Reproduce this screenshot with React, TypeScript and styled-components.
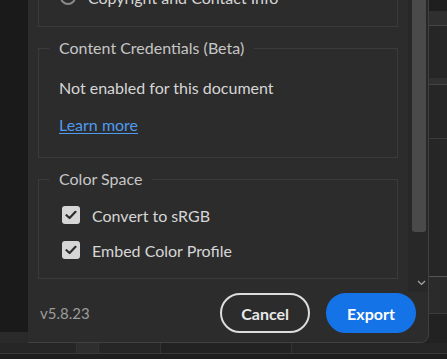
import styled, { createGlobalStyle } from 'styled-components';

const GlobalStyle = createGlobalStyle`
  html, body {
    margin: 0;
    padding: 0;
    background: #1e1e1e;
    overflow: hidden;
  }
  body {
    font-family: Lato, "Noto Sans", sans-serif;
  }
`;

// Fundo da aplicação + diálogo
const Page = styled.div`
  width: 447px;
  height: 359px;
  display: grid;
  grid-template-columns: 28px 401px 1fr;
  grid-template-rows: 343px 1fr;
  background: #1e1e1e;
`;

const LeftRail = styled.div`
  display: flex;
  flex-direction: column;
  background: #2a2a2a;
`;

const LeftDark = styled.div`
  height: 332px;
  background: #1a1a1a;
`;

const RightRail = styled.div`
  display: flex;
  flex-direction: column;
  background: #262626;
`;

const Band = styled.div<{ h: number; bg: string; line?: string }>`
  height: ${p => p.h}px;
  flex-shrink: 0;
  background: ${p => p.bg};
  border-bottom: 1px solid ${p => p.line || 'transparent'};
  box-sizing: border-box;
`;

const BottomBar = styled.div`
  grid-column: 1 / -1;
  display: flex;
  flex-direction: column;
`;

const BottomRow = styled.div`
  height: 10px;
  display: flex;
  background: #262626;
  border-bottom: 1px solid #3a3a3a;
`;

const BottomCell = styled.div<{ w: number; bg?: string }>`
  width: ${p => p.w}px;
  flex-shrink: 0;
  background: ${p => p.bg || 'transparent'};
  border-right: 1px solid #333;
`;

const Dialog = styled.div`
  display: flex;
  flex-direction: column;
  background: #2c2c2c;
  border-right: 1px solid #404040;
  border-bottom: 1px solid #404040;
  border-bottom-right-radius: 8px;
  overflow: hidden;
  color: #d4d4d4;
`;

const ScrollArea = styled.div`
  height: 292px;
  display: flex;
  overflow: hidden;
`;

const Content = styled.div`
  flex: 1;
  display: flex;
  flex-direction: column;
  gap: 11px;
  padding: 0 10px;
  margin-top: -15px;
`;

const Group = styled.fieldset<{ padTop?: number; padBottom: number }>`
  margin: 0;
  padding: ${p => p.padTop ?? 0}px 20px ${p => p.padBottom}px 20px;
  border: 1px solid #3b3b3b;
  display: flex;
  flex-direction: column;
  min-width: 0;
`;

const OpenTopGroup = styled(Group)`
  border-top: none;
`;

const Legend = styled.legend`
  margin-left: -10px;
  padding: 0 10px;
  font-size: 16px;
  line-height: 20px;
  color: #c6c6c6;
`;

const Text = styled.div<{ mt: number }>`
  margin-top: ${p => p.mt}px;
  font-size: 16px;
  line-height: 20px;
  color: #d6d6d6;
`;

const Link = styled.a<{ mt: number }>`
  margin-top: ${p => p.mt}px;
  font-size: 16px;
  line-height: 20px;
  color: #4f9bf0;
  text-decoration: underline;
  text-underline-offset: 2px;
  align-self: flex-start;
`;

const OptionRow = styled.label<{ mt: number }>`
  margin-top: ${p => p.mt}px;
  height: 24px;
  display: flex;
  align-items: center;
  gap: 12px;
  font-size: 16px;
  color: #d6d6d6;
`;

const Radio = styled.span`
  width: 16px;
  height: 16px;
  box-sizing: border-box;
  border: 2px solid #8a8a8a;
  border-radius: 50%;
  margin-left: 1px;
`;

const Box = styled.span`
  width: 18px;
  height: 18px;
  margin-left: 3px;
  border-radius: 3px;
  background: #d6d6d6;
  display: flex;
  align-items: center;
  justify-content: center;
`;

const Scrollbar = styled.div`
  width: 20px;
  display: flex;
  flex-direction: column;
  align-items: center;
  background: #282828;
`;

const Thumb = styled.div`
  width: 14px;
  height: 232px;
  margin-left: 2px;
  background: #4a4a4a;
  border-radius: 0 0 3px 3px;
`;

const Arrow = styled.div`
  margin-top: 48px;
  margin-left: 6px;
  color: #a8a8a8;
  display: flex;
`;

const Footer = styled.div`
  flex: 1;
  display: flex;
  align-items: flex-start;
  padding: 1px 12px 0 12px;
  gap: 16px;
`;

const Version = styled.div`
  flex: 1;
  line-height: 40px;
  font-size: 15px;
  color: #9c9c9c;
`;

const Button = styled.button<{ primary?: boolean }>`
  height: 40px;
  min-width: 88px;
  padding: 0 19px;
  box-sizing: border-box;
  border-radius: 20px;
  font-family: Lato, "Noto Sans", sans-serif;
  font-size: 16px;
  font-weight: 700;
  cursor: pointer;
  color: ${p => (p.primary ? '#ffffff' : '#e8e8e8')};
  background: ${p => (p.primary ? '#1473e6' : 'transparent')};
  border: 2px solid ${p => (p.primary ? '#1473e6' : '#dcdcdc')};
  ${p => p.primary && 'min-width: 90px;'}
`;

const Check = () => (
    <svg width="12" height="10" viewBox="0 0 12 10">
        <path d="M1.5 5.2 L4.6 8 L10.5 1.8" fill="none" stroke="#2c2c2c" strokeWidth="2.2" strokeLinecap="round" strokeLinejoin="round" />
    </svg>
);

export default function App() {
    return (
        <>
            <GlobalStyle />
            <Page>
                <LeftRail>
                    <LeftDark />
                </LeftRail>

                <Dialog>
                    <ScrollArea>
                        <Content>
                            <OpenTopGroup padBottom={17}>
                                <OptionRow mt={0}>
                                    <Radio />
                                    Copyright and Contact Info
                                </OptionRow>
                            </OpenTopGroup>

                            <Group padBottom={22}>
                                <Legend>Content Credentials (Beta)</Legend>
                                <Text mt={20}>Not enabled for this document</Text>
                                <Link mt={17} href="#">Learn more</Link>
                            </Group>

                            <Group padBottom={16}>
                                <Legend>Color Space</Legend>
                                <OptionRow mt={14}>
                                    <Box><Check /></Box>
                                    Convert to sRGB
                                </OptionRow>
                                <OptionRow mt={11}>
                                    <Box><Check /></Box>
                                    Embed Color Profile
                                </OptionRow>
                            </Group>
                        </Content>

                        <Scrollbar>
                            <Thumb />
                            <Arrow>
                                <svg width="9" height="6" viewBox="0 0 9 6">
                                    <path d="M1 1 L4.5 4.5 L8 1" fill="none" stroke="currentColor" strokeWidth="1.2" />
                                </svg>
                            </Arrow>
                        </Scrollbar>
                    </ScrollArea>

                    <Footer>
                        <Version>v5.8.23</Version>
                        <Button>Cancel</Button>
                        <Button primary>Export</Button>
                    </Footer>
                </Dialog>

                <RightRail>
                    <Band h={11} bg="#1f1f1f" />
                    <Band h={15} bg="#2f2f2f" line="#464646" />
                    <Band h={52} bg="#262626" />
                    <Band h={7} bg="#303030" line="#444" />
                    <Band h={54} bg="#262626" line="#3c3c3c" />
                    <Band h={138} bg="#262626" line="#555" />
                    <Band h={37} bg="#2b2b2b" line="#3c3c3c" />
                    <Band h={29} bg="#222222" />
                </RightRail>

                <BottomBar>
                    <BottomRow>
                        <BottomCell w={76} />
                        <BottomCell w={21} bg="#2e2e2e" />
                        <BottomCell w={61} />
                        <BottomCell w={130} bg="#222" />
                    </BottomRow>
                </BottomBar>
            </Page>
        </>
    );
}
